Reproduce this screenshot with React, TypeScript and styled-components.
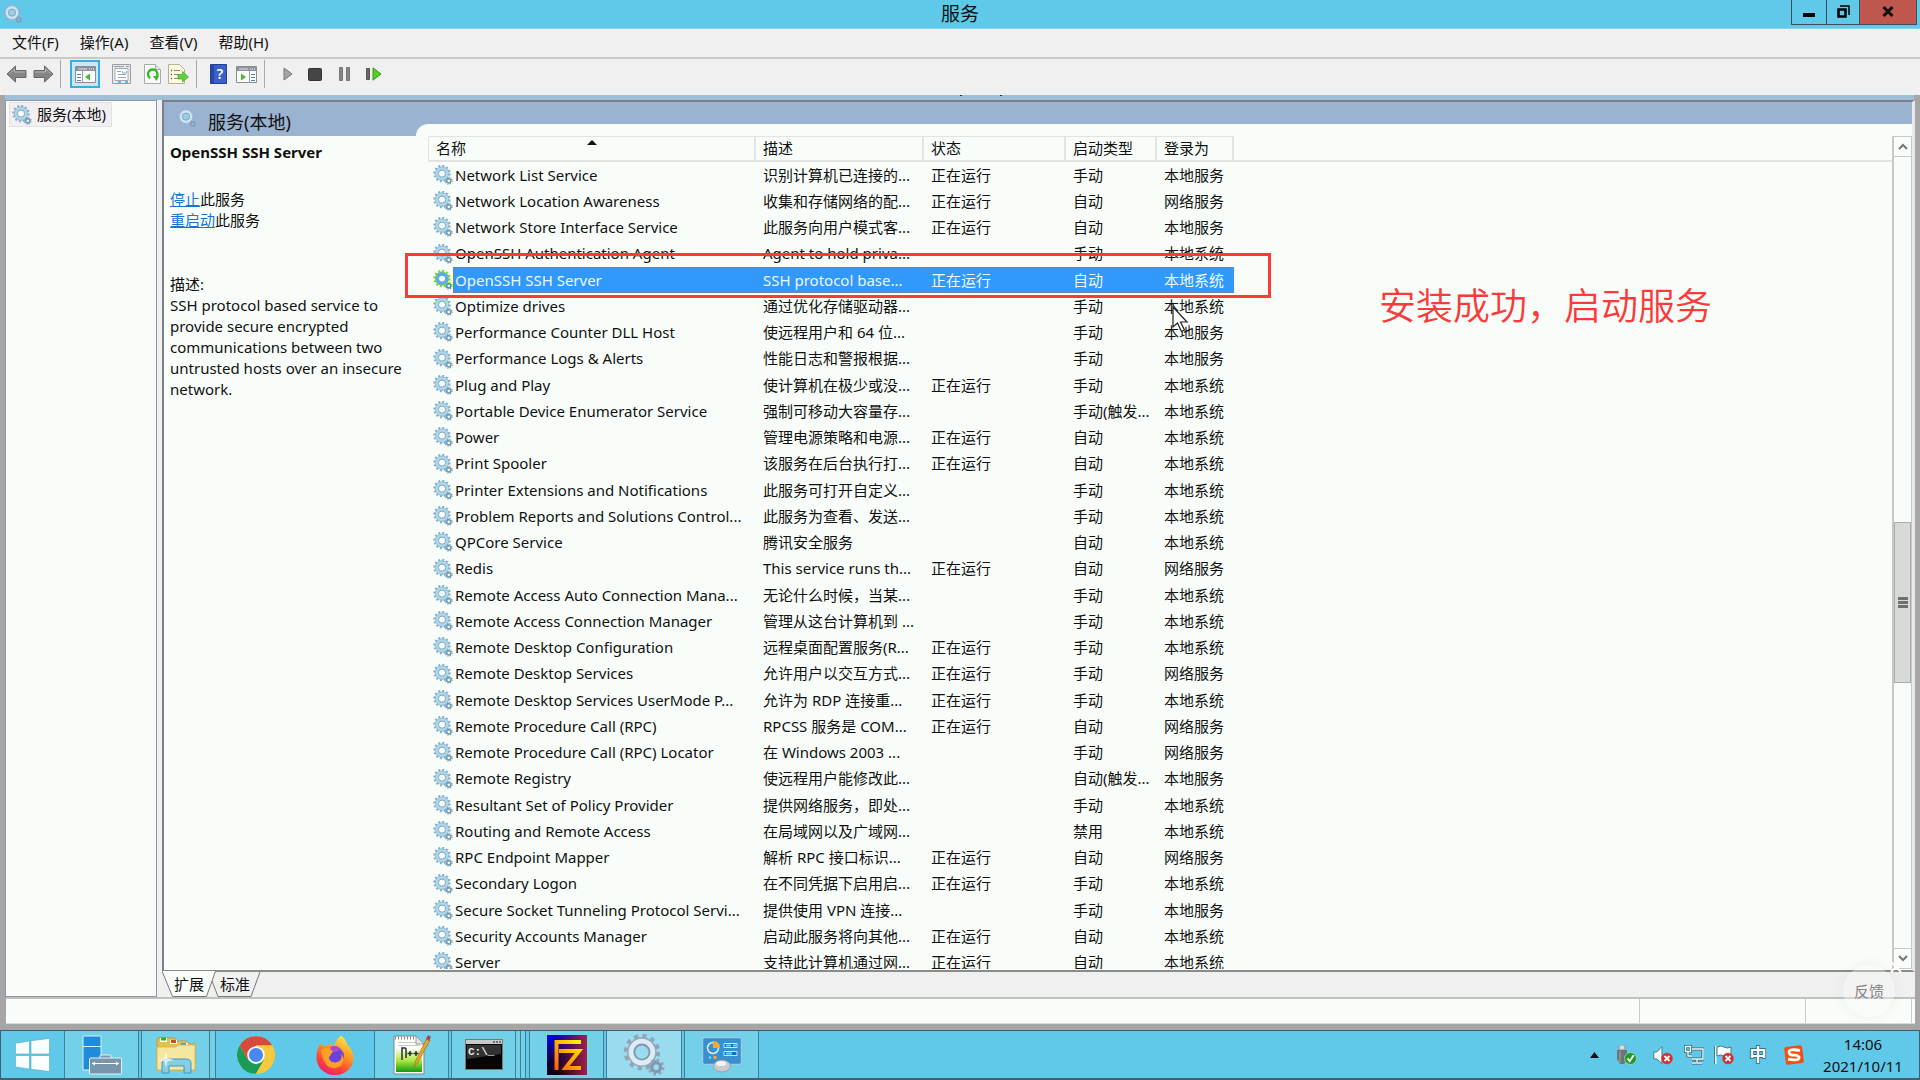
import React from 'react';
import styled, { createGlobalStyle } from 'styled-components';

const c = {
  sky: '#60c8e9',
  paper: '#f8fdf9',
  face: '#f0f0f0',
  frame: '#a6a6a6',
  band: '#9ab3d1',
  strip: '#9dbfd8',
  line: '#e2e3e2',
  red: '#fb3a3a',
  select: '#3199fb',
  ink: '#111111',
};

const Global = createGlobalStyle`
  *, *::before, *::after { box-sizing: border-box; }
  body { margin: 0; overflow: hidden; background: ${c.frame}; }
  button { font: inherit; color: inherit; border: 0; padding: 0; background: none; cursor: default; }
`;

const Desktop = styled.div`
  position: relative;
  display: flex;
  flex-direction: column;
  height: 100vh;
  font: 15px/21px "Noto Sans", "Noto Sans CJK SC", sans-serif;
  color: ${c.ink};
`;

/* ---------- window chrome ---------- */

const TitleBar = styled.header`
  display: grid;
  grid-template-columns: 1fr auto 1fr;
  align-items: start;
  height: 29px;
  background: ${c.sky};
  border-bottom: 1px solid #86d3ec;
`;
const TitleIcon = styled.span`
  padding: 4px 3px;
  line-height: 0;
`;
const Title = styled.h1`
  margin: 0;
  font-size: 19px;
  line-height: 28px;
  font-weight: 400;
`;
const WindowButtons = styled.div`
  display: flex;
  justify-content: flex-end;
  padding-right: 3px;
`;
const WindowButton = styled.button<{ $w: number; $close?: boolean }>`
  width: ${p => p.$w}px;
  height: 25px;
  padding-bottom: 2px;
  display: grid;
  place-items: center;
  border: 1px solid #3c5058;
  border-top: 0;
  margin-left: -1px;
  background: ${p => (p.$close ? '#c0574e' : 'transparent')};
`;

const MenuBar = styled.nav`
  display: flex;
  align-items: flex-start;
  height: 30px;
  padding-left: 2px;
  background: ${c.face};
  border-bottom: 2px solid #c8cac8;
`;
const MenuItem = styled.button`
  padding: 0 11px 0 10px;
  line-height: 26px;
`;

const ToolBar = styled.div`
  display: flex;
  align-items: center;
  height: 36px;
  padding: 0 4px 6px;
  background: ${c.face};
`;
const ToolButton = styled.button<{ $w: number; $on?: boolean }>`
  width: ${p => p.$w}px;
  height: 28px;
  display: grid;
  place-items: center;
  border: ${p => (p.$on ? '2px solid #35aee0' : '0')};
  background: ${p => (p.$on ? '#cbe7f4' : 'none')};
`;
const ToolSeparator = styled.span<{ $gap: number }>`
  width: 1px;
  height: 28px;
  margin: 0 ${p => p.$gap}px 0 1px;
  background: #a9a9a9;
`;

const Strip = styled.div`
  display: flex;
  justify-content: center;
  align-items: flex-start;
  height: 5px;
  padding-left: 42px;
  margin: 0 6px 0 5px;
  background: ${c.strip};
`;

/* ---------- panes ---------- */

const Body = styled.main`
  flex: 1;
  min-height: 0;
  display: flex;
  gap: 5px;
  margin: 0 5px;
  background: ${c.face};
`;
const Tree = styled.aside`
  width: 152px;
  padding: 1px 3px;
  background: ${c.paper};
  border: 1px solid #8e97a8;
`;
const TreeItem = styled.button`
  display: flex;
  align-items: center;
  gap: 5px;
  height: 25px;
  padding: 0 5px 0 2px;
  border: 1px solid #e3e0e4;
  background: #f1eff2;
`;
const Work = styled.section`
  flex: 1;
  min-width: 0;
  display: flex;
  flex-direction: column;
`;
const Content = styled.div`
  flex: 1;
  min-height: 0;
  display: flex;
  border: 2px solid #7d8084;
  border-right: 3px solid #e8e9e8;
  border-bottom: 2px solid #8a8c8a;
  background: ${c.band};
`;
const Detail = styled.div`
  width: 252px;
  display: flex;
  flex-direction: column;
`;
const DetailHead = styled.div`
  display: flex;
  align-items: flex-start;
  gap: 11px;
  height: 34px;
  padding: 6px 13px;
  font-size: 18px;
  line-height: 28px;
`;
const DetailBody = styled.div`
  flex: 1;
  padding: 6px;
  background: ${c.paper};
`;
const Heading = styled.h2`
  margin: 0 0 26px;
  font-size: 15px;
  line-height: 21px;
`;
const ActionLine = styled.div``;
const Action = styled.a`
  color: #1673d8;
  text-decoration: underline;
`;
const Description = styled.div`
  margin: 43px 0 0;
`;
const Paragraph = styled.p`
  margin: 0;
`;
const ListPane = styled.div`
  flex: 1;
  min-width: 0;
  display: flex;
  align-items: stretch;
  margin-top: 22px;
  padding: 12px 0 1px 12px;
  border-top-left-radius: 12px;
  background: ${c.paper};
`;
const ListView = styled.div`
  flex: 1;
  min-width: 0;
  overflow: hidden;
`;
const Table = styled.table`
  width: 100%;
  table-layout: fixed;
  border-collapse: separate;
  border-spacing: 0;
`;
const Col = styled.col<{ $w?: number }>`
  width: ${p => (p.$w ? p.$w + 'px' : 'auto')};
`;
const HeadCell = styled.th<{ $blank?: boolean }>`
  position: relative;
  height: 26px;
  padding: 0 7px;
  text-align: left;
  font-weight: 400;
  line-height: 23px;
  white-space: nowrap;
  border-bottom: 2px solid ${c.line};
  border-top: ${p => (p.$blank ? '0' : `1px solid ${c.line}`)};
  border-right: ${p => (p.$blank ? '0' : `2px solid ${c.line}`)};
  &:first-child { border-left: 1px solid ${c.line}; }
`;
const SortMark = styled.span`
  position: absolute;
  left: calc(50% - 5px);
  top: 3px;
  border: 5px solid transparent;
  border-top: 0;
  border-bottom-color: #111;
`;
const Row = styled.tr`
  height: 26px;
  &:nth-child(4n) { height: 27px; }
`;
const Cell = styled.td<{ $sel?: boolean }>`
  padding: 0 0 0 7px;
  line-height: ${p => (p.$sel ? 24 : 25)}px;
  white-space: nowrap;
  background: ${p => (p.$sel ? c.select : 'none')};
  color: ${p => (p.$sel ? '#eef6ff' : 'inherit')};
  border: 0 dotted #a5764c;
  border-width: ${p => (p.$sel ? '1px 0' : '0')};
`;
const NameCell = styled.td`
  padding: 0 0 0 5px;
  line-height: 25px;
  white-space: nowrap;
`;
const NameBox = styled.div`
  display: flex;
  align-items: center;
`;
const Name = styled.span<{ $sel?: boolean }>`
  flex: 1;
  padding-left: ${p => (p.$sel ? 1 : 2)}px;
  line-height: ${p => (p.$sel ? 24 : 25)}px;
  background: ${p => (p.$sel ? c.select : 'none')};
  color: ${p => (p.$sel ? '#eef6ff' : 'inherit')};
  border: 0 dotted #a5764c;
  border-width: ${p => (p.$sel ? '1px 0 1px 1px' : '0')};
`;

const ScrollBar = styled.div`
  width: 20px;
  display: flex;
  flex-direction: column;
  border: 1px solid #c6cac7;
  border-width: 1px 1px 1px 2px;
`;
const ScrollButton = styled.button<{ $down?: boolean }>`
  height: 20px;
  display: grid;
  place-items: center;
  border-${p => (p.$down ? 'top' : 'bottom')}: 1px solid #c6cac7;
`;
const Track = styled.div<{ $grow: number }>`
  flex: ${p => p.$grow};
`;
const Thumb = styled.div`
  flex: 159;
  display: grid;
  place-items: center;
  background: #d7dad7;
  border: 1px solid #a9aca9;
`;

const Tabs = styled.div`
  display: flex;
  height: 25px;
`;
const Tab = styled.button<{ $w: number; $pull?: boolean }>`
  position: relative;
  z-index: ${p => (p.$pull ? 0 : 1)};
  width: ${p => p.$w}px;
  height: 24px;
  margin-left: ${p => (p.$pull ? -6 : 0)}px;
  line-height: 22px;
  svg { position: absolute; left: 0; top: -1px; z-index: -1; }
`;
const StatusBar = styled.footer`
  display: flex;
  justify-content: flex-end;
  height: 27px;
  margin: 0 5px 0 6px;
  background: ${c.paper};
  border-top: 2px solid #bfc0bf;
  border-bottom: 1px solid #d8dad8;
`;
const StatusCell = styled.span<{ $w: number }>`
  width: ${p => p.$w}px;
  border-left: 1px solid #c9ccc9;
`;

/* ---------- taskbar ---------- */

const TaskBar = styled.div`
  display: flex;
  height: 50px;
  margin-top: 6px;
  background: ${c.sky};
  border: 1px solid #40606c;
  border-bottom-width: 2px;
`;
const Task = styled.button<{ $w: number; $state?: 'open' | 'active'; $gap?: number }>`
  width: ${p => p.$w}px;
  margin-right: ${p => p.$gap ?? 0}px;
  display: grid;
  place-items: center;
  border: ${p => (p.$state ? '1px solid #3f7f93' : '0')};
  border-width: 0 1px;
  background: ${p => (p.$state === 'active' ? '#99dcf0' : p.$state ? '#72d0e8' : 'none')};
`;
const Stack = styled.span<{ $w: number; $gap?: number }>`
  width: ${p => p.$w}px;
  margin-right: ${p => p.$gap ?? 0}px;
  border-right: 1px solid #3f7f93;
  background: #72d0e8;
`;
const Tray = styled.div`
  display: flex;
  align-items: center;
  margin-left: auto;
`;
const TrayButton = styled.button<{ $w: number }>`
  width: ${p => p.$w}px;
  display: grid;
  place-items: center;
`;
const Clock = styled.time`
  width: 104px;
  padding-right: 8px;
  text-align: center;
  font-size: 15px;
  line-height: 22px;
  white-space: pre-line;
`;

/* ---------- things lying over the window ---------- */

const RedBox = styled.div`
  position: absolute;
  left: 405px;
  top: 253px;
  width: 866px;
  height: 45px;
  border: 3px solid ${c.red};
`;
const RedNote = styled.p`
  position: absolute;
  left: 1379px;
  top: 282px;
  margin: 0;
  font-size: 37px;
  line-height: 48px;
  font-weight: 350;
  color: ${c.red};
  white-space: nowrap;
`;
const Pointer = styled.svg`
  position: absolute;
  left: 1172px;
  top: 306px;
`;
const Feedback = styled.button`
  position: absolute;
  right: 25px;
  bottom: 63px;
  width: 52px;
  height: 52px;
  border-radius: 50%;
  background: rgba(248, 250, 248, 0.35);
  box-shadow: 0 0 14px rgba(0, 0, 0, 0.05);
  color: #858585;
`;
const Dismiss = styled.svg`
  position: absolute;
  right: 18px;
  bottom: 107px;
`;

/* ---------- drawings ---------- */

function Gear({ size = 20, tone = 'blue' }: { size?: number; tone?: 'blue' | 'green' | 'pale' | 'metal' }) {
  const t = {
    blue: ['#86aec7', '#aed8ed', '#7199b1'],
    green: ['#83d32a', '#58adf0', '#3f8fdc'],
    pale: ['#8fb4cf', '#cfe6f2', '#7f9fb9'],
    metal: ['#92a5b7', '#dcecf6', '#8396ab'],
  }[tone];
  const hole = { blue: '#f8fdfb', green: '#f8fdfb', pale: '#9dcde4', metal: '#99dcf0' }[tone];
  return (
    <svg width={size} height={size} viewBox="0 0 20 20" fill="none" aria-hidden="true">
      <circle cx="9" cy="8.6" r="7.6" stroke={t[0]} strokeWidth="2.2" strokeDasharray="1.99 1.99" />
      <circle cx="9" cy="8.6" r="5.2" stroke={t[1]} strokeWidth="3.2" />
      <circle cx="9" cy="8.6" r="6.7" stroke={t[0]} strokeWidth="0.7" />
      <circle cx="9" cy="8.6" r="3.6" stroke={t[2]} strokeWidth="0.9" fill={hole} />
      <circle cx="15.8" cy="15.8" r="3.3" stroke={t[0]} strokeWidth="1.4" strokeDasharray="1.3 1.3" />
      <circle cx="15.8" cy="15.8" r="2.1" stroke={t[2]} strokeWidth="1.5" />
    </svg>
  );
}

const Arrow = ({ flip }: { flip?: boolean }) => (
  <svg width="21" height="18" viewBox="0 0 21 18" transform={flip ? 'scale(-1 1)' : undefined}>
    <path d="M1 9 9.5 1v4.5H20v7H9.500V17z" fill="#858585" stroke="#686868" strokeLinejoin="round" />
    <path d="M3.500 8.500 8.500 4v3H19" fill="none" stroke="#b5b5b5" />
  </svg>
);
const PaneIcon = ({ right }: { right?: boolean }) => (
  <svg width="21" height="17" viewBox="0 0 21 17">
    <path d="M.5.5h20v16H.5z" fill="#fbfbfb" stroke="#8a8f96" />
    <path d="M1 1h19v4H1z" fill="#8b929b" />
    <path d="M3 3h9" stroke="#dfe3e8" /><path d="M14 3h1m1 0h1m1 0h1" stroke="#fff" />
    {right ? (
      <>
        <path d="M13.500 5v11" stroke="#9aa0a8" />
        <path d="M15 8.500h4m-4 3h4m-4 3h4" stroke="#4b83b5" />
        <path d="m5 7.500 5 3.500-5 3.500z" fill="#4cb727" />
      </>
    ) : (
      <>
        <path d="M7.500 5v11" stroke="#9aa0a8" />
        <path d="M2 8.500h4m-4 3h4m-4 3h4" stroke="#4b83b5" />
        <path d="M15 7.500 10 11l5 3.500z" fill="#4cb727" />
      </>
    )}
  </svg>
);
const PropsIcon = () => (
  <svg width="19" height="20" viewBox="0 0 19 20">
    <path d="M.5.5h18v19H.5z" fill="#e8eaec" stroke="#9a9fa5" />
    <path d="M3 4.500h13v12H3z" fill="#fff" stroke="#a6abb1" />
    <path d="M2 2.500h10m2 0h3" stroke="#88a0b0" />
    <path d="M5 7.500h4m-3 3h8m-8 3h8M10.500 7v2h4V7" fill="none" stroke="#90aabe" />
    <path d="M6 18h3m4 0h3" stroke="#60bfe0" strokeWidth="2" />
  </svg>
);
const RefreshIcon = () => (
  <svg width="17" height="20" viewBox="0 0 17 20">
    <path d="M.5.5h11l5 5v14H.5z" fill="#fcfcfa" stroke="#aaa" />
    <path d="M11.500.5v5h5" fill="#e4e4e4" stroke="#aaa" />
    <path d="M6 14.200a4.800 4.800 0 1 1 6.500-1" fill="none" stroke="#3cb52e" strokeWidth="2.400" />
    <path d="m9 12 6 0-2.500 5z" fill="#3cb52e" />
  </svg>
);
const ExportIcon = () => (
  <svg width="21" height="20" viewBox="0 0 21 20">
    <path d="M.5.5h11l5 5v14H.5z" fill="#fdf9dd" stroke="#b5b19b" />
    <path d="M3 6.500h1m-1 4h1m-1 4h1" stroke="#555" strokeWidth="1.500" />
    <path d="M6 6.500h6m-6 4h6m-6 4h6" stroke="#8587a5" />
    <path d="M10 10.500h4.500V7.500l6 5.500-6 5v-3H10z" fill="#62cf3e" stroke="#45a82a" strokeWidth=".7" />
  </svg>
);
const HelpIcon = () => (
  <svg width="17" height="20" viewBox="0 0 17 20">
    <path d="M.5.5h16v19H.5z" fill="#3b5fc8" stroke="#223f95" />
    <path d="M1 1h3v18H1z" fill="#2748a8" />
    <text x="10" y="15" textAnchor="middle" fontSize="14" fontFamily="Noto Sans" fontWeight="600" fill="#fff">?</text>
  </svg>
);
const PlayIcon = () => (
  <svg width="10" height="14" viewBox="0 0 10 14"><path d="M1 1v12l8-6z" fill="#a4a4a4" stroke="#777" /></svg>
);
const StopIcon = () => (
  <svg width="14" height="13" viewBox="0 0 14 13"><rect x=".5" y=".5" width="13" height="12" rx="1" fill="#454545" stroke="#333" /></svg>
);
const PauseIcon = () => (
  <svg width="11" height="14" viewBox="0 0 11 14"><path d="M.5.5h3v13h-3zM7.500.5h3v13h-3z" fill="#858585" stroke="#777" /></svg>
);
const RestartIcon = () => (
  <svg width="16" height="14" viewBox="0 0 16 14">
    <path d="M.5 1.500h3v11h-3z" fill="#666" stroke="#555" />
    <path d="M7 .8v12.400L15 7z" fill="#54cf27" stroke="#399c1e" />
  </svg>
);

const WindowsLogo = () => (
  <svg width="35" height="34" viewBox="0 0 35 34" fill="#fbffff" stroke="#4fa9c4" strokeWidth=".6">
    <path d="M.5 5.200 14.500 3v13H.5zM16 2.800 34.500.4V16H16zM.5 17.500h14V31L.5 29zM16 17.500h18.500v16L16 31.200z" />
  </svg>
);
const ServerManager = () => (
  <svg width="40" height="40" viewBox="0 0 40 40">
    <path d="M1 1h18v34H1z" fill="#1e8bdb" stroke="#d7f1fb" />
    <path d="M1 11.500h18" stroke="#d7f1fb" />
    <path d="M18 24v-3q0-1 1-1h9q1 0 1 1v3" fill="#7796a9" stroke="#e4f2f8" />
    <rect x="7.500" y="23" width="32" height="16" rx="1" fill="#7796a9" stroke="#e4f2f8" />
    <path d="M10 28.500h27" stroke="#fff" /><path d="m10 28.500 3-2v4zm27 0-3-2v4z" fill="#fff" />
  </svg>
);
const Explorer = () => (
  <svg width="40" height="38" viewBox="0 0 40 38">
    <path d="M1 34V4q0-2 2-2h16l2 3h10l2 3h6v26z" fill="#e2bd59" stroke="#c19b3c" />
    <path d="M4 2h7v4H4zM14 4h7v4h-7zM25 7h7v4h-7z" fill="#fff" />
    <path d="M5 1.500h5v3H5z" fill="#28b02e" /><path d="M15 4h5v3h-5z" fill="#d84925" /><path d="M25 7h5v3h-5z" fill="#2ba4dd" />
    <path d="M1 11h19l2-2h17v25H1z" fill="#f6e7a0" stroke="#d8b95b" />
    <path d="M6 37V27q0-4 4-4h20q5 0 5 4v10h-7v-7H13v7z" fill="#7fcdeb" stroke="#3a94c4" opacity=".95" />
    <path d="m10 16 1.500 6L18 24l-6.500 1.500L10 32l-1.500-6.500L2 24l6.500-2z" fill="#fff" opacity=".7" />
  </svg>
);
const Chrome = () => (
  <svg width="38" height="38" viewBox="0 0 38 38">
    <circle cx="19" cy="19" r="18.800" fill="#f6c83b" />
    <path d="M2.700 9.600A18.800 18.800 0 0 1 35.300 9.600H19L10.900 23.700z" fill="#d64b3e" />
    <path d="M2.700 9.600A18.800 18.800 0 0 0 19 37.800L27.100 23.700 19 28.400 10.900 23.700z" fill="#189c58" />
    <path d="M19 37.800A18.800 18.800 0 0 0 35.300 9.600H19l8.100 14.100z" fill="#f6c83b" />
    <circle cx="19" cy="19" r="8.800" fill="#f7f9fb" /><circle cx="19" cy="19" r="7" fill="#4a87ee" />
  </svg>
);
const Firefox = () => (
  <svg width="38" height="40" viewBox="0 0 38 40">
    <defs>
      <linearGradient id="fx" x1=".8" y1="0" x2=".3" y2="1">
        <stop offset="0" stopColor="#fff04a" /><stop offset=".4" stopColor="#ff9a20" />
        <stop offset=".75" stopColor="#ff4238" /><stop offset="1" stopColor="#e91e78" />
      </linearGradient>
    </defs>
    <path d="M25 .5c4 3 5 6 6 9q6 5 6.500 13A18.500 17.500 0 0 1 .5 23C.5 15 3 11 5 8q1 3 3 4 5-5 11-1c0-5 3-8 6-10.500z" fill="url(#fx)" />
    <circle cx="19.500" cy="21" r="8.500" fill="#7047d8" />
    <path d="M5 15q6-4 10 0 5-1 7 1-4 0-6 4-4 1-3 4 3 5 8 3 7-3 3-9 5 4 3 9-3 7-11 6-9-2-11-18z" fill="#ff9f25" />
    <circle cx="20" cy="21.500" r="5.500" fill="#6a42dc" />
    <path d="M14 12q8-3 12 4-5-2-9 1z" fill="#a946d9" />
  </svg>
);
const Notepad = () => (
  <svg width="38" height="40" viewBox="0 0 38 40">
    <defs>
      <linearGradient id="np" x1="0" y1="0" x2="0" y2="1">
        <stop offset=".3" stopColor="#fbfdf8" /><stop offset=".65" stopColor="#b3e843" /><stop offset="1" stopColor="#159b12" />
      </linearGradient>
    </defs>
    <path d="M1 1h22l8 8v30H1z" fill="#f8f8f5" stroke="#7d8b84" /><path d="M3 3h20l6 6v28H3z" fill="url(#np)" />
    <path d="M2 3h20" stroke="#888" strokeWidth="3" strokeDasharray="1 2" /><path d="M5 7.500h18m-18 3h22" stroke="#c5cdd0" />
    <path d="M23 1v8h8z" fill="#e7e7e7" stroke="#999" />
    <path d="M9 25V13h3q1 0 1 1v9M14.500 18.500h5m-2.500-2.500v5M20.500 18.500h5m-2.500-2.500v5" fill="none" stroke="#26302a" strokeWidth="1.500" />
    <path d="m21 32 2-7L34 3l3 2-12 22z" fill="#e9a92c" stroke="#9a6c1c" strokeWidth=".7" /><path d="m33 4 2-4 3 2-2 4z" fill="#a44a50" />
  </svg>
);
const Cmd = () => (
  <svg width="38" height="31" viewBox="0 0 38 31">
    <path d="M.5.5h37v30H.5z" fill="#060606" stroke="#777" /><path d="M1 1h36v4H1z" fill="#c9c9c9" />
    <path d="M28 3h2m1 0h2m1 0h2" stroke="#555" strokeWidth="1.500" /><path d="M2 6h34v9L2 20z" fill="#333" />
    <text x="3" y="16" fontFamily="Liberation Mono" fontSize="11" fontWeight="700" fill="#e6e6e6">C:\_</text>
  </svg>
);
const FileZilla = () => (
  <svg width="40" height="40" viewBox="0 0 40 40">
    <defs>
      <linearGradient id="fb" x1="0" y1="0" x2=".3" y2="1"><stop offset="0" stopColor="#0400f0" /><stop offset=".6" stopColor="#100040" /><stop offset="1" stopColor="#050008" /></linearGradient>
      <linearGradient id="fr" x1="0" y1="0" x2="1" y2="0"><stop offset=".2" stopColor="#a02030" stopOpacity="0" /><stop offset="1" stopColor="#a02050" /></linearGradient>
      <linearGradient id="ft" x1=".9" y1="0" x2="0" y2="1"><stop offset="0" stopColor="#fff200" /><stop offset="1" stopColor="#ff5a10" /></linearGradient>
    </defs>
    <path d="M0 0h40v40H0z" fill="url(#fb)" /><path d="M0 0h40v40H0z" fill="url(#fr)" />
    <path d="M9.500 35V7H34M12 16h20L18.500 33H34" fill="none" stroke="url(#ft)" strokeWidth="4" />
  </svg>
);
const ControlPanel = () => (
  <svg width="40" height="36" viewBox="0 0 40 36">
    <rect x=".7" y=".7" width="38.600" height="26.600" rx="2" fill="#3990cf" stroke="#a9cfe4" />
    <circle cx="11" cy="11" r="5.500" fill="none" stroke="#d5f1fb" strokeWidth="1.500" /><path d="M11 11V4q7 0 7 7z" fill="#f5a832" />
    <path d="M22 6.500h13v4H22zM22 14.500h13v4H22z" fill="#1c6bb5" stroke="#c4e9f8" /><path d="M24 8.500h5m2 0h3m-10 8h6" stroke="#65dcf5" strokeWidth="2" />
    <circle cx="8" cy="20.500" r="1.300" fill="#65dcf5" /><circle cx="13" cy="20.500" r="1.700" fill="#f5a832" />
    <ellipse cx="20" cy="29" rx="8.500" ry="6" fill="#c8cccf" stroke="#8b9297" strokeWidth=".7" /><ellipse cx="19" cy="26.500" rx="5" ry="2.500" fill="#f3f4f4" />
  </svg>
);

const Bad = () => (
  <>
    <circle cx="14" cy="13.500" r="5.500" fill="#d92c30" stroke="#b84b4b" strokeWidth=".5" />
    <path d="m11.500 11 5 5m0-5-5 5" stroke="#fff" strokeWidth="1.800" />
  </>
);
const Usb = () => (
  <svg width="21" height="20" viewBox="0 0 21 20">
    <path d="M3 0h6v5H3z" fill="#d8dadb" stroke="#8a9599" /><path d="M1 5h10v9l-3 5H4l-3-5z" fill="#6d7478" /><path d="M4 6v12" stroke="#9fa8ac" />
    <circle cx="14.500" cy="13.500" r="6" fill="#219b27" stroke="#bfe8c2" strokeWidth=".6" /><path d="m11.500 13.500 2.200 2.800 4-6" fill="none" stroke="#fff" strokeWidth="1.800" />
  </svg>
);
const Volume = () => (
  <svg width="20" height="20" viewBox="0 0 20 20"><path d="M.8 7h3L9 1.500v17L3.800 14h-3z" fill="#f3fbfd" stroke="#4e7886" /><Bad /></svg>
);
const Network = () => (
  <svg width="20" height="20" viewBox="0 0 20 20" fill="none">
    <path d="M8 4h11v10H8M13 14v3m-5 1h10M1.500 1.500h5v5h-5zM4 6.500V11h4" stroke="#3c6472" strokeWidth="3.200" />
    <path d="M8 4h11v10H8M13 14v3m-5 1h10M1.500 1.500h5v5h-5zM4 6.500V11h4" stroke="#effafd" strokeWidth="1.400" />
  </svg>
);
const Flag = () => (
  <svg width="20" height="20" viewBox="0 0 20 20"><path d="M1.500 1v18" stroke="#e8f6fa" strokeWidth="2" /><path d="M3 2q4-2 7 0t7 0v9q-4 2-7 0t-7 0z" fill="#f3fbfd" stroke="#4e7886" /><path d="M.5 1v18" stroke="#4e7886" /><Bad /></svg>
);
const Ime = () => (
  <svg width="22" height="22" viewBox="0 0 22 22">
    <text x="11" y="17" textAnchor="middle" fontFamily="Noto Sans CJK SC" fontSize="17" fontWeight="700" fill="#fafdfe" stroke="#33606f" strokeWidth="1.600" paintOrder="stroke">中</text>
  </svg>
);
const Sogou = () => (
  <svg width="20" height="20" viewBox="0 0 20 20">
    <rect x="1" y="1" width="18" height="18" rx="2" fill="#f3500f" transform="rotate(-7 10 10)" />
    <path d="M16 5.500Q5 3.500 5 7t5 3.200q6 .3 5 3t-11 1" fill="none" stroke="#fff" strokeWidth="2.800" />
  </svg>
);

/* ---------- data ---------- */

const R = '正在运行', A = '自动', M = '手动', LS = '本地服务', NS = '网络服务', SYS = '本地系统';
const services: [string, string, string, string, string][] = [
  ['Network List Service', '识别计算机已连接的...', R, M, LS],
  ['Network Location Awareness', '收集和存储网络的配...', R, A, NS],
  ['Network Store Interface Service', '此服务向用户模式客...', R, A, LS],
  ['OpenSSH Authentication Agent', 'Agent to hold priva...', '', M, SYS],
  ['OpenSSH SSH Server', 'SSH protocol base...', R, A, SYS],
  ['Optimize drives', '通过优化存储驱动器...', '', M, SYS],
  ['Performance Counter DLL Host', '使远程用户和 64 位...', '', M, LS],
  ['Performance Logs & Alerts', '性能日志和警报根据...', '', M, LS],
  ['Plug and Play', '使计算机在极少或没...', R, M, SYS],
  ['Portable Device Enumerator Service', '强制可移动大容量存...', '', '手动(触发...', SYS],
  ['Power', '管理电源策略和电源...', R, A, SYS],
  ['Print Spooler', '该服务在后台执行打...', R, A, SYS],
  ['Printer Extensions and Notifications', '此服务可打开自定义...', '', M, SYS],
  ['Problem Reports and Solutions Control...', '此服务为查看、发送...', '', M, SYS],
  ['QPCore Service', '腾讯安全服务', '', A, SYS],
  ['Redis', 'This service runs th...', R, A, NS],
  ['Remote Access Auto Connection Mana...', '无论什么时候，当某...', '', M, SYS],
  ['Remote Access Connection Manager', '管理从这台计算机到 ...', '', M, SYS],
  ['Remote Desktop Configuration', '远程桌面配置服务(R...', R, M, SYS],
  ['Remote Desktop Services', '允许用户以交互方式...', R, M, NS],
  ['Remote Desktop Services UserMode P...', '允许为 RDP 连接重...', R, M, SYS],
  ['Remote Procedure Call (RPC)', 'RPCSS 服务是 COM...', R, A, NS],
  ['Remote Procedure Call (RPC) Locator', '在 Windows 2003 ...', '', M, NS],
  ['Remote Registry', '使远程用户能修改此...', '', '自动(触发...', LS],
  ['Resultant Set of Policy Provider', '提供网络服务，即处...', '', M, SYS],
  ['Routing and Remote Access', '在局域网以及广域网...', '', '禁用', SYS],
  ['RPC Endpoint Mapper', '解析 RPC 接口标识...', R, A, NS],
  ['Secondary Logon', '在不同凭据下启用启...', R, M, SYS],
  ['Secure Socket Tunneling Protocol Servi...', '提供使用 VPN 连接...', '', M, LS],
  ['Security Accounts Manager', '启动此服务将向其他...', R, A, SYS],
  ['Server', '支持此计算机通过网...', R, A, SYS],
];
const SELECTED = 4;
const columns = ['名称', '描述', '状态', '启动类型', '登录为'];
const widths = [328, 168, 142, 91, 77];

export default function App() {
  return (
    <Desktop>
      <Global />
      <TitleBar>
        <TitleIcon><Gear tone="pale" /></TitleIcon>
        <Title>服务</Title>
        <WindowButtons>
          <WindowButton $w={36} aria-label="最小化">
            <svg width="12" height="12"><path d="M0 8h12v4H0z" /></svg>
          </WindowButton>
          <WindowButton $w={34} aria-label="还原">
            <svg width="13" height="13" fill="none" stroke="#000"><path d="M1.500 4.500h7v7h-7z" strokeWidth="2.500" /><path d="M3 1h9v9" strokeWidth="1.500" /></svg>
          </WindowButton>
          <WindowButton $w={58} $close aria-label="关闭">
            <svg width="12" height="11" stroke="#111" strokeWidth="3"><path d="m1.500 1 9 9m0-9-9 9" /></svg>
          </WindowButton>
        </WindowButtons>
      </TitleBar>

      <MenuBar>
        {['文件(F)', '操作(A)', '查看(V)', '帮助(H)'].map(m => <MenuItem key={m}>{m}</MenuItem>)}
      </MenuBar>

      <ToolBar>
        <ToolButton $w={24} aria-label="后退"><Arrow /></ToolButton>
        <ToolButton $w={31} aria-label="前进"><Arrow flip /></ToolButton>
        <ToolSeparator $gap={9} />
        <ToolButton $w={30} $on aria-label="控制台树"><PaneIcon /></ToolButton>
        <ToolButton $w={43} aria-label="属性"><PropsIcon /></ToolButton>
        <ToolButton $w={18} aria-label="刷新"><RefreshIcon /></ToolButton>
        <ToolButton $w={34} aria-label="导出列表"><ExportIcon /></ToolButton>
        <ToolSeparator $gap={10} />
        <ToolButton $w={22} aria-label="帮助"><HelpIcon /></ToolButton>
        <ToolButton $w={34} aria-label="操作窗格"><PaneIcon right /></ToolButton>
        <ToolSeparator $gap={11} />
        <ToolButton $w={24} aria-label="启动"><PlayIcon /></ToolButton>
        <ToolButton $w={30} aria-label="停止"><StopIcon /></ToolButton>
        <ToolButton $w={28} aria-label="暂停"><PauseIcon /></ToolButton>
        <ToolButton $w={31} aria-label="重新启动"><RestartIcon /></ToolButton>
      </ToolBar>
      <Strip>
        <svg width="44" height="2" viewBox="0 0 44 2"><path d="M1 0h2v1H1zM41 0h2v1h-2z" fill="#333" /></svg>
      </Strip>

      <Body>
        <Tree>
          <TreeItem><Gear />服务(本地)</TreeItem>
        </Tree>
        <Work>
          <Content>
            <Detail>
              <DetailHead><Gear tone="pale" />服务(本地)</DetailHead>
              <DetailBody>
                <Heading>OpenSSH SSH Server</Heading>
                <ActionLine><Action href="#stop">停止</Action>此服务</ActionLine>
                <ActionLine><Action href="#restart">重启动</Action>此服务</ActionLine>
                <Description>
                  描述:
                  <Paragraph>
                    SSH protocol based service to<br />provide secure encrypted<br />communications between two<br />
                    untrusted hosts over an insecure<br />network.
                  </Paragraph>
                </Description>
              </DetailBody>
            </Detail>
            <ListPane>
              <ListView>
                <Table>
                  <colgroup>{widths.map((w, i) => <Col key={i} $w={w} />)}<Col /></colgroup>
                  <thead>
                    <tr>
                      {columns.map((t, i) => <HeadCell key={t} scope="col">{t}{i === 0 && <SortMark />}</HeadCell>)}
                      <HeadCell $blank />
                    </tr>
                  </thead>
                  <tbody>
                    {services.map(([name, ...rest], i) => (
                      <Row key={name}>
                        <NameCell>
                          <NameBox>
                            <Gear tone={i === SELECTED ? 'green' : 'blue'} />
                            <Name $sel={i === SELECTED}>{name}</Name>
                          </NameBox>
                        </NameCell>
                        {rest.map((t, k) => <Cell key={k} $sel={i === SELECTED}>{t}</Cell>)}
                        <td />
                      </Row>
                    ))}
                  </tbody>
                </Table>
              </ListView>
              <ScrollBar>
                <ScrollButton aria-label="向上滚动">
                  <svg width="10" height="7" fill="none" stroke="#777" strokeWidth="2"><path d="m1 6 4-4 4 4" /></svg>
                </ScrollButton>
                <Track $grow={366} />
                <Thumb>
                  <svg width="10" height="11" fill="#6e706e"><path d="M0 0h10v3H0zM0 4h10v3H0zM0 8h10v3H0z" /></svg>
                </Thumb>
                <Track $grow={266} />
                <ScrollButton $down aria-label="向下滚动">
                  <svg width="10" height="7" fill="none" stroke="#777" strokeWidth="2"><path d="m1 1 4 4 4-4" /></svg>
                </ScrollButton>
              </ScrollBar>
            </ListPane>
          </Content>
          <Tabs>
            <Tab $w={54}>
              <svg width="54" height="26" viewBox="0 0 54 26"><path d="M0 0 10.500 25.500h34L53.500 0" fill={c.paper} stroke="#777" /></svg>
              扩展
            </Tab>
            <Tab $w={50} $pull>
              <svg width="52" height="26" viewBox="0 0 52 26"><path d="M2 10 8 25.500h33L50 1" fill="none" stroke="#777" /></svg>
              标准
            </Tab>
          </Tabs>
        </Work>
      </Body>

      <StatusBar>
        <StatusCell $w={166} />
        <StatusCell $w={106} />
        <StatusCell $w={4} />
      </StatusBar>

      <TaskBar>
        <Task $w={63} aria-label="开始"><WindowsLogo /></Task>
        <Task $w={75} $state="open" $gap={2} aria-label="服务器管理器"><ServerManager /></Task>
        <Task $w={69} $state="open" aria-label="文件资源管理器"><Explorer /></Task>
        <Stack $w={6} />
        <Task $w={80} aria-label="Chrome"><Chrome /></Task>
        <Task $w={78} aria-label="Firefox"><Firefox /></Task>
        <Task $w={75} $state="open" $gap={2} aria-label="Notepad++"><Notepad /></Task>
        <Task $w={65} $state="open" aria-label="命令提示符"><Cmd /></Task>
        <Stack $w={5} />
        <Stack $w={5} $gap={3} />
        <Task $w={75} $state="open" $gap={2} aria-label="FileZilla"><FileZilla /></Task>
        <Task $w={76} $state="active" $gap={2} aria-label="服务"><Gear size={42} tone="metal" /></Task>
        <Task $w={75} $state="open" aria-label="控制面板"><ControlPanel /></Task>
        <Tray>
          <TrayButton $w={30} aria-label="显示隐藏的图标"><svg width="9" height="6"><path d="M0 6 4.500 0 9 6z" fill="#111" /></svg></TrayButton>
          <TrayButton $w={34} aria-label="安全删除硬件"><Usb /></TrayButton>
          <TrayButton $w={40} aria-label="音量"><Volume /></TrayButton>
          <TrayButton $w={22} aria-label="网络"><Network /></TrayButton>
          <TrayButton $w={38} aria-label="操作中心"><Flag /></TrayButton>
          <TrayButton $w={30} aria-label="输入法"><Ime /></TrayButton>
          <TrayButton $w={42} aria-label="搜狗输入法"><Sogou /></TrayButton>
          <Clock>{'14:06\n2021/10/11'}</Clock>
        </Tray>
      </TaskBar>

      <RedBox />
      <RedNote>安装成功，启动服务</RedNote>
      <Pointer width="18" height="27" viewBox="0 0 18 27">
        <path d="M1 1v20l4.500-4 4 8.500 3-1.500-4-8H15z" fill="#fff" stroke="#222" strokeWidth="1.200" />
      </Pointer>
      <Feedback>反馈</Feedback>
      <Dismiss width="12" height="12" stroke="#fff" strokeWidth="2"><path d="m1 1 10 10M11 1 1 11" /></Dismiss>
    </Desktop>
  );
}
